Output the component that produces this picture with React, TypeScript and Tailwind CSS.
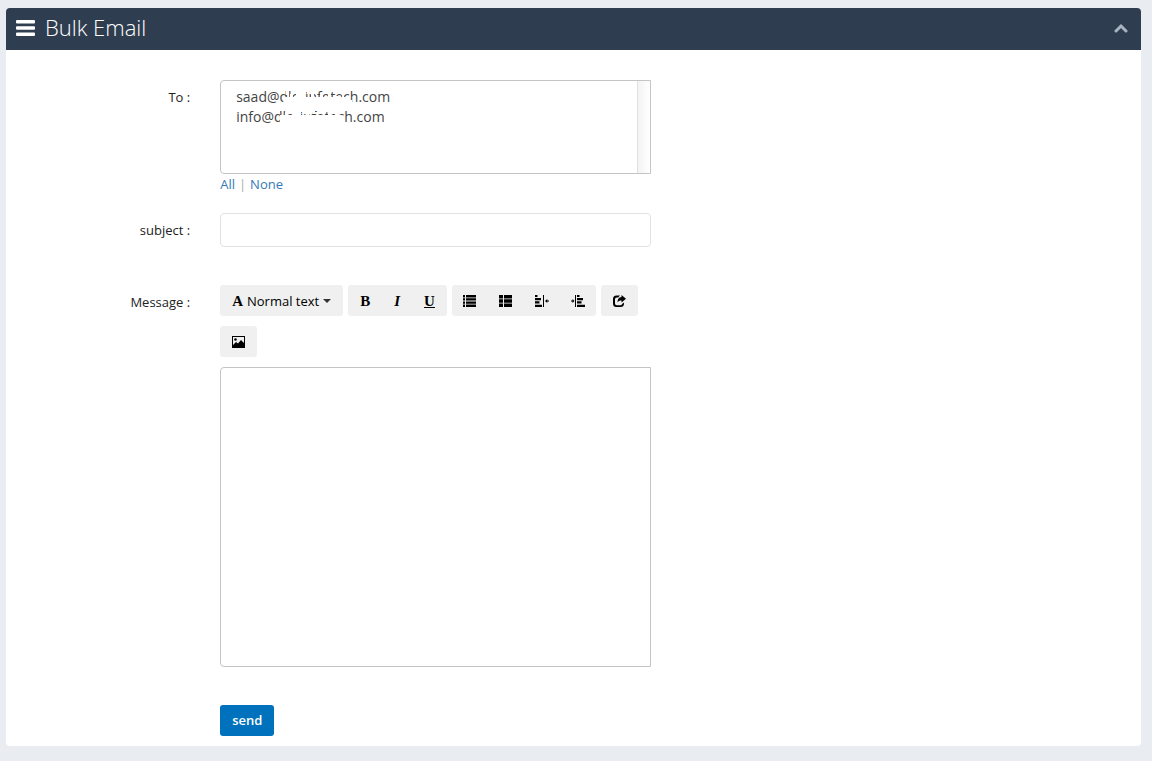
import React, { useState } from 'react';

const ListIcon = () => (
  <svg width="13" height="12" viewBox="0 0 13 12" className="fill-current">
    <path d="M0 0h2v2.400H0zM3 0h10v2.400H3zM0 3.200h2v2.400H0zM3 3.200h10v2.400H3zM0 6.400h2v2.400H0zM3 6.400h10v2.400H3zM0 9.600h2V12H0zM3 9.600h10V12H3z" />
  </svg>
);

const ThListIcon = () => (
  <svg width="13" height="12" viewBox="0 0 13 12" className="fill-current">
    <path d="M0 0h4v3.400H0zM5 0h8v3.400H5zM0 4.300h4v3.400H0zM5 4.300h8v3.400H5zM0 8.600h4V12H0zM5 8.600h8V12H5z" />
  </svg>
);

const OutdentIcon = () => (
  <svg width="14" height="12" viewBox="0 0 14 12" className="fill-current">
    <path d="M0 0h2.500v2H0zM0 3h6v2.200H0zM0 6.300h4.500v2.200H0zM0 9.700h7V12H0zM8 0h1v12H8zM10 6l2.300-2v1.400H14v1.200h-1.700V8z" />
  </svg>
);

const IndentIcon = () => (
  <svg width="14" height="12" viewBox="0 0 14 12" className="fill-current">
    <path d="M6 0h2.500v2H6zM6 3h6v2.200H6zM6 6.300h4.500v2.200H6zM6 9.700h8V12H6zM4 0h1v12H4zM3.500 6L1.500 4v1.400H0v1.200h1.500V8z" />
  </svg>
);

const ShareIcon = () => (
  <svg width="13" height="12" viewBox="0 0 13 12" className="fill-current">
    <path d="M7 .5H3.500A3.500 3.500 0 0 0 0 4v4.500A3.500 3.500 0 0 0 3.500 12h4A3.500 3.500 0 0 0 11 8.500v-1L9 9A1.500 1.500 0 0 1 7.500 10.200H3.700A1.700 1.700 0 0 1 2 8.500V4.200a1.700 1.700 0 0 1 1.700-1.700h1.500z" />
    <path d="M8.500 0L13 3.800 8.500 7.600V5.500C6.600 5.500 5.500 6 4.500 7.500c0-3.300 1.300-5.300 4-5.500z" />
  </svg>
);

const PictureIcon = () => (
  <svg width="13" height="12" viewBox="0 0 13 12" className="fill-current">
    <path fillRule="evenodd" d="M0 0h13v12H0zM1 1v8l3-3 2 1.500L9 4l3 3V1z" />
    <circle cx="3.500" cy="3.500" r="1.300" />
  </svg>
);

// hides most of the domain in the two addresses
const Redaction = () => (
  <svg width="80" height="42" viewBox="0 0 80 42" className="pointer-events-none absolute top-[6px] left-[60px] fill-white">
    <path d="M3 17L4 11H70V14H72V22H3z" />
    <path d="M6 4h3v5H6zM10 8h3v4h-3zM14 4h2v3h-2zM16 7h9v5h-9zM27 5h3v3h-3zM31 8h3v4h-3zM36 5h2v2h-2zM40 8h3v4h-3zM45 4h2v4h-2zM48 8h3v4h-3zM55 10h3v2h-3zM62 8h2v4h-2z" />
    <path d="M0 41V29H62V31H65V41z" />
    <path d="M5 26h3v4H5zM12 23h9v7h-9zM26 27h3v3h-3zM33 25h2v3h-2zM48 27h3v3h-3zM55 27h2v3h-2z" />
  </svg>
);

const toolGroups = [
  [
    { label: 'Bold', width: 'px-3', face: <span className="font-bold">B</span> },
    { label: 'Italic', width: 'px-3', face: <span className="font-bold italic">I</span> },
    { label: 'Underline', width: 'px-3', face: <span className="font-bold underline">U</span> },
  ],
  [
    { label: 'Unordered list', width: 'w-9', face: <ListIcon /> },
    { label: 'Ordered list', width: 'w-9', face: <ThListIcon /> },
    { label: 'Outdent', width: 'w-9', face: <OutdentIcon /> },
    { label: 'Indent', width: 'w-9', face: <IndentIcon /> },
  ],
  [{ label: 'Insert link', width: 'px-3', face: <ShareIcon /> }],
  [{ label: 'Insert image', width: 'px-3', face: <PictureIcon /> }],
];

const recipients = ['saad@dlcsinfotech.com', 'info@dlcsinfotech.com'];

const App: React.FC = () => {
  const [selected, setSelected] = useState<string[]>([]);
  const [subject, setSubject] = useState('');
  const [message, setMessage] = useState('');
  const [open, setOpen] = useState(true);

  const pick = (event: React.MouseEvent, values: string[]) => {
    event.preventDefault();
    setSelected(values);
  };

  return (
    <div className="min-h-screen bg-[#e9edf2] pt-2 pr-[11px] pb-[15px] pl-[6px] font-['Open_Sans',sans-serif] text-[13px] leading-5 text-[#222]">
      <section className="overflow-hidden rounded bg-white">
        <header className="flex h-[42px] items-center bg-[#2e3e50] px-[10px] pb-[2px] text-white">
          <svg width="19" height="16" viewBox="0 0 19 16" className="fill-current">
            <rect width="19" height="3.500" rx="1" />
            <rect y="6.300" width="19" height="3.500" rx="1" />
            <rect y="12.500" width="19" height="3.500" rx="1" />
          </svg>
          <h1 className="ml-[10px] pb-[2px] text-[22px] font-light">Bulk Email</h1>
          <button type="button" aria-label="Toggle panel" onClick={() => setOpen(!open)} className="ml-auto mr-[3px]">
            <svg width="14" height="10" viewBox="0 0 14 10" fill="none" stroke="#a8b4c0" strokeWidth="3" strokeLinecap="round">
              <path d="M2 8l5-5 5 5" />
            </svg>
          </button>
        </header>

        {open && (
          <form className="px-[15px] pt-[30px] pb-[10px]" onSubmit={(e) => e.preventDefault()}>
            <div className="grid grid-cols-12">
              <label htmlFor="to" className="col-span-2 px-[15px] pt-[7px] text-right">To :</label>
              <div className="col-span-5 px-[15px]">
                <div className="relative">
                  <select
                    id="to"
                    multiple
                    value={selected}
                    onChange={(e) => setSelected(Array.from(e.target.selectedOptions, (o) => o.value))}
                    className="block h-[94px] w-full rounded-l border border-[#c4c4c4] bg-white py-[6px] pl-[15px] text-[14px] text-[#444]"
                  >
                    {recipients.map((item) => (
                      <option key={item} className="h-5 p-0 leading-5">{item}</option>
                    ))}
                  </select>
                  <Redaction />
                  <span className="absolute inset-y-px right-px w-[13px] border-l border-[#e0e0e0] bg-linear-to-r from-[#f3f3f3] to-white" />
                </div>
                <div className="flex gap-1 text-[#aaa]">
                  <a href="#all" onClick={(e) => pick(e, recipients)} className="text-[#337ab7]">All</a>
                  <span>|</span>
                  <a href="#none" onClick={(e) => pick(e, [])} className="text-[#337ab7]">None</a>
                </div>
              </div>
            </div>

            <div className="mt-[19px] grid grid-cols-12">
              <label htmlFor="subject" className="col-span-2 px-[15px] pt-[7px] text-right">subject :</label>
              <div className="col-span-5 px-[15px]">
                <input
                  id="subject"
                  type="text"
                  value={subject}
                  onChange={(e) => setSubject(e.target.value)}
                  className="block h-[34px] w-full rounded border border-[#e2e2e4] px-3"
                />
              </div>
            </div>

            <div className="mt-[38px] grid grid-cols-12">
              <label htmlFor="message" className="col-span-2 px-[15px] pt-[7px] text-right">Message :</label>
              <div className="col-span-5 px-[15px]">
                <div className="flex flex-wrap gap-x-[5px] gap-y-[10px] text-black">
                  <button type="button" className="flex h-[31px] items-center rounded-[3px] bg-[#f0f0f0] px-3">
                    <span className="mr-1 font-['Liberation_Serif',serif] text-[15px] font-bold">A</span>
                    Normal text
                    <span className="ml-1 border-x-4 border-t-4 border-x-transparent border-t-[#333]" />
                  </button>
                  {toolGroups.map((group) => (
                    <div key={group[0].label} className="flex h-[31px] rounded-[3px] bg-[#f0f0f0]">
                      {group.map((tool) => (
                        <button
                          key={tool.label}
                          type="button"
                          aria-label={tool.label}
                          className={`flex items-center justify-center font-['Liberation_Serif',serif] text-[15px] ${tool.width}`}
                        >
                          {tool.face}
                        </button>
                      ))}
                    </div>
                  ))}
                </div>
                <textarea
                  id="message"
                  value={message}
                  onChange={(e) => setMessage(e.target.value)}
                  className="mt-[10px] block h-[300px] w-full resize-none rounded-l border border-[#c4c4c4] p-3"
                />
                <button type="submit" className="mt-[38px] block h-[31px] rounded-[3px] bg-[#0071bc] px-3 pb-[2px] font-semibold text-white">
                  send
                </button>
              </div>
            </div>
          </form>
        )}
      </section>
    </div>
  );
};

export default App;
